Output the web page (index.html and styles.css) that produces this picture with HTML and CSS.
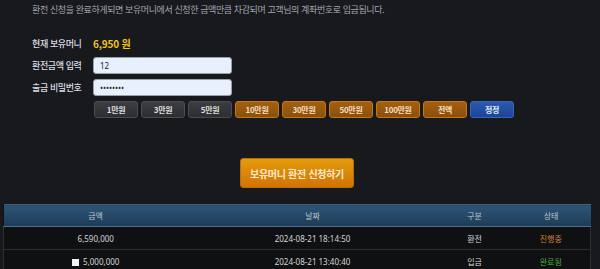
FILE: index.html
```html
<!DOCTYPE html>
<html lang="ko">
<head>
    <meta charset="UTF-8">
    <meta name="viewport" content="width=device-width, initial-scale=1.0">
    <title>환전 신청</title>
    <link rel="stylesheet" href="styles.css">
</head>
<body>
    <p class="notice">환전 신청을 완료하게되면 보유머니에서 신청한 금액만큼 차감되며 고객님의 계좌번호로 입금됩니다.</p>

    <div class="form">
        <div class="label">현재 보유머니</div>
        <div class="money">6,950 원</div>

        <div class="label">환전금액 입력</div>
        <div><input type="text" class="field" value="12"></div>

        <div class="label">출금 비밀번호</div>
        <div><input type="password" class="field" value="12345678"></div>

        <div></div>
        <div class="amounts">
            <button class="btn">1만원</button>
            <button class="btn">3만원</button>
            <button class="btn">5만원</button>
            <button class="btn orange">10만원</button>
            <button class="btn orange">30만원</button>
            <button class="btn orange">50만원</button>
            <button class="btn orange">100만원</button>
            <button class="btn orange">전액</button>
            <button class="btn blue">정정</button>
        </div>
    </div>

    <div class="submit-wrap">
        <button class="submit">보유머니 환전 신청하기</button>
    </div>

    <table class="history">
        <thead>
            <tr>
                <th class="c-amount">금액</th>
                <th class="c-date">날짜</th>
                <th class="c-type">구분</th>
                <th class="c-state">상태</th>
            </tr>
        </thead>
        <tbody>
            <tr>
                <td>6,590,000</td>
                <td>2024-08-21 18:14:50</td>
                <td>환전</td>
                <td class="pending">진행중</td>
            </tr>
            <tr>
                <td><span class="check"></span>5,000,000</td>
                <td>2024-08-21 13:40:40</td>
                <td>입금</td>
                <td class="done">완료됨</td>
            </tr>
        </tbody>
    </table>
</body>
</html>
```

FILE: styles.css
```css
body {
    margin: 0;
    background: #17191d;
    color: #d0d2d6;
    font-family: "Noto Sans CJK KR", "Noto Sans", sans-serif;
    font-size: 9px;
}
.notice {
    margin: 0;
    padding: 3px 0 0 32px;
    height: 14px;
    line-height: 14px;
    color: #a3a7ae;
    letter-spacing: -0.4px;
}
.form {
    display: grid;
    grid-template-columns: 61px auto;
    grid-auto-rows: 17px;
    row-gap: 5px;
    padding: 18px 0 0 32px;
}
.label {
    line-height: 17px;
    color: #dcdee1;
    font-weight: 500;
    letter-spacing: -0.4px;
}
.money {
    line-height: 17px;
    color: #f2c318;
    font-size: 10px;
    font-weight: bold;
    letter-spacing: -0.2px;
}
.field {
    box-sizing: border-box;
    width: 139px;
    height: 17px;
    margin: 0;
    padding: 0 6px;
    border: 1px solid #9aa0a8;
    border-radius: 3px;
    background: #e8f0fe;
    color: #222;
    font-family: "Noto Sans", sans-serif;
    font-size: 8px;
}
.amounts {
    display: flex;
    gap: 3px;
    padding-left: 1px;
}
.btn {
    box-sizing: border-box;
    width: 44px;
    height: 17px;
    margin: 0;
    padding: 0;
    border: 1px solid #4a4c50;
    border-radius: 3px;
    background: linear-gradient(#3b3d41, #2c2e31);
    color: #dedede;
    font-family: "Noto Sans CJK KR", sans-serif;
    font-size: 8px;
    font-weight: bold;
    letter-spacing: -0.3px;
}
.btn.orange {
    border-color: #c47618;
    background: linear-gradient(#a4600f, #8c4f0a);
    color: #f1dfc2;
}
.btn.blue {
    border-color: #3766c0;
    background: linear-gradient(#2a59ae, #1d4496);
    color: #e3ebf8;
}
.submit-wrap {
    display: flex;
    justify-content: center;
    padding: 40px 0 0 0;
    margin-left: -6px;
}
.submit {
    width: 114px;
    height: 30px;
    border: 1px solid #b86d06;
    border-radius: 3px;
    background: linear-gradient(#e39b0c, #d27306);
    color: #fcebd0;
    font-family: "Noto Sans CJK KR", sans-serif;
    font-size: 10px;
    font-weight: bold;
    letter-spacing: -0.3px;
}
.history {
    width: 587px;
    margin: 16px 0 0 3px;
    border-collapse: collapse;
    table-layout: fixed;
    background: #0f1012;
}
.history th {
    height: 21px;
    padding: 0;
    border-top: 1px solid #3d6283;
    border-bottom: 1px solid #4b6f91;
    background: linear-gradient(#2e5576, #1f3b58);
    color: #bac5d0;
    font-weight: normal;
    font-size: 8px;
}
.history td {
    height: 22px;
    padding: 0;
    border-bottom: 1px solid #2c2e31;
    text-align: center;
    color: #d5d6d8;
    font-family: "Noto Sans", "Noto Sans CJK KR", sans-serif;
    font-size: 8px;
}
.history tbody tr {
    border-left: 1px solid #2c2e31;
    border-right: 1px solid #2c2e31;
}
.c-amount { width: 184px; }
.c-date { width: 250px; }
.c-type { width: 74px; }
.c-state { width: 79px; }
.check {
    display: inline-block;
    width: 7px;
    height: 7px;
    margin-right: 4px;
    background: #f4f4f4;
    vertical-align: -1px;
}
.history td.pending { color: #d9822b; }
.history td.done { color: #46a63d; }
```
